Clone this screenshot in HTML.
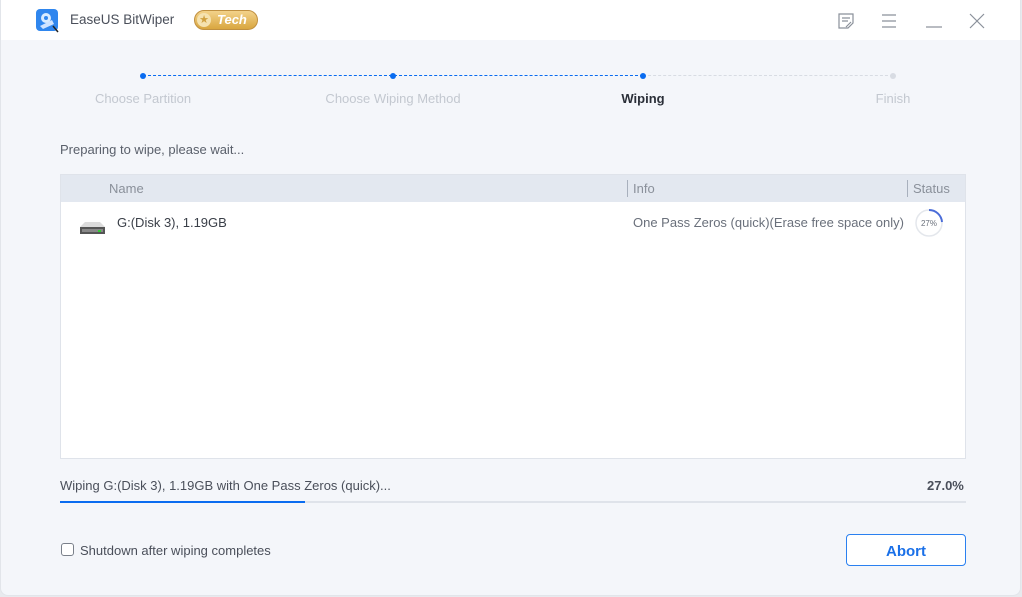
<!DOCTYPE html>
<html><head><meta charset="utf-8"><style>
*{margin:0;padding:0;box-sizing:border-box}
body{width:1022px;height:597px;background:#e8eaee;font-family:"Liberation Sans",sans-serif;position:relative;overflow:hidden}
.win{position:absolute;left:0;top:0;width:1021px;height:596px;background:#f4f6fa;border-radius:0 0 8px 8px;border:1px solid #e2e5ea;border-top:none}
.title{position:absolute;left:0;top:0;width:100%;height:40px;background:#fff}
.a{position:absolute;white-space:nowrap}
.lbl{font-size:13px;color:#c3c8d0;transform:translateX(-50%)}
.dot{position:absolute;width:6px;height:6px;border-radius:3px;background:#0a6cf0;top:73px}
</style></head><body>
<div class="win">
<div class="title">
 <svg class="a" style="left:34px;top:8px" width="25" height="25" viewBox="0 0 25 25">
  <rect x="1" y="1" width="22" height="22" rx="4" fill="#2f86ee"/>
  <circle cx="11" cy="10" r="5" fill="#d8ebff"/><circle cx="11" cy="10" r="2" fill="#2f86ee"/>
  <path d="M5 18 L17 12 L19 16 L8 21Z" fill="#cfe3ff"/><path d="M18 18 L23 24" stroke="#222" stroke-width="1.5"/>
 </svg>
 <div class="a" style="left:69px;top:12px;font-size:13.5px;color:#4a4f5a">EaseUS BitWiper</div>
 <div class="a" style="left:193px;top:10px;width:64px;height:20px;border-radius:10px;background:linear-gradient(#f3d28a,#d9a640);border:1px solid #c09040"></div>
 <div class="a" style="left:196px;top:13px;width:14px;height:14px;border-radius:7px;background:#f5e2b0;color:#d0a040;font-size:11px;text-align:center;line-height:14px">★</div>
 <div class="a" style="left:216px;top:12px;font-size:13px;font-weight:bold;font-style:italic;color:#fff">Tech</div>
 <svg class="a" style="left:836px;top:12px" width="18" height="18" viewBox="0 0 18 18" fill="none" stroke="#8a909a" stroke-width="1.2"><path d="M2 2H16V11L11 16H2Z"/><path d="M5 6H13M5 9H11M9 15L14 10"/></svg>
 <svg class="a" style="left:880px;top:13px" width="16" height="16" fill="none" stroke="#8a909a" stroke-width="1.2"><path d="M1 2H15M1 8H15M1 14H15"/></svg>
 <svg class="a" style="left:924px;top:13px" width="18" height="16" fill="none" stroke="#8a909a" stroke-width="1.2"><path d="M1 14H17"/></svg>
 <svg class="a" style="left:968px;top:13px" width="16" height="16" fill="none" stroke="#8a909a" stroke-width="1.2"><path d="M1 1L15 15M15 1L1 15"/></svg>
</div>
<div class="a" style="left:142px;top:75px;width:500px;border-top:1.3px dashed #0a6cf0"></div>
<div class="a" style="left:642px;top:75px;width:250px;border-top:1px dashed #d8dce3"></div>
<div class="dot" style="left:139px"></div><div class="dot" style="left:389px"></div><div class="dot" style="left:639px"></div><div class="dot" style="left:889px;background:#d8dce3"></div>
<div class="a lbl" style="left:142px;top:91px">Choose Partition</div>
<div class="a lbl" style="left:392px;top:91px">Choose Wiping Method</div>
<div class="a lbl" style="left:642px;top:91px;color:#2a2f38;font-weight:bold">Wiping</div>
<div class="a lbl" style="left:892px;top:91px">Finish</div>
<div class="a" style="left:59px;top:142px;font-size:13px;color:#5a606b">Preparing to wipe, please wait...</div>
<div class="a" style="left:59px;top:174px;width:906px;height:285px;background:#fff;border:1px solid #dfe3ea">
 <div style="height:27px;background:#e3e8f0;position:relative;font-size:13px;color:#8a909a">
  <span class="a" style="left:48px;top:6px">Name</span>
  <span class="a" style="left:566px;top:5px;height:17px;border-left:1px solid #a8b0bd"></span>
  <span class="a" style="left:572px;top:6px">Info</span>
  <span class="a" style="left:846px;top:5px;height:17px;border-left:1px solid #a8b0bd"></span>
  <span class="a" style="left:852px;top:6px">Status</span>
 </div>
 <svg class="a" style="left:17px;top:46px" width="30" height="14"><path d="M2 6L7 1H22L27 6V13H2Z" fill="#dcdcdc"/><rect x="2" y="6" width="25" height="7" fill="#555"/><rect x="4" y="8" width="21" height="3" fill="#888"/><rect x="20" y="9" width="3" height="2" fill="#3c3"/></svg>
 <div class="a" style="left:56px;top:40px;font-size:13px;color:#3a3f48">G:(Disk 3), 1.19GB</div>
 <div class="a" style="left:572px;top:40px;font-size:13px;color:#6a707b">One Pass Zeros (quick)(Erase free space only)</div>
 <svg class="a" style="left:853px;top:33px" width="30" height="30"><circle cx="15" cy="15" r="13" fill="none" stroke="#e4e7ec" stroke-width="1.5"/><path d="M15 2A13 13 0 0 1 28 14" fill="none" stroke="#4a6cd8" stroke-width="2"/><text x="15" y="18" font-size="8" text-anchor="middle" fill="#6a707b" font-family="Liberation Sans">27%</text></svg>
</div>
<div class="a" style="left:59px;top:478px;font-size:13px;color:#4a4f5a">Wiping G:(Disk 3), 1.19GB with One Pass Zeros (quick)...</div>
<div class="a" style="left:926px;top:478px;font-size:13px;color:#4a4f5a;font-weight:bold">27.0%</div>
<div class="a" style="left:59px;top:501px;width:906px;height:2px;background:#dfe3ea"></div>
<div class="a" style="left:59px;top:501px;width:245px;height:2px;background:#0a6cf0"></div>
<div class="a" style="left:60px;top:543px;width:13px;height:13px;border:1px solid #7a808a;border-radius:3px;background:#fff"></div>
<div class="a" style="left:79px;top:543px;font-size:13px;color:#4a4f5a">Shutdown after wiping completes</div>
<div class="a" style="left:845px;top:534px;width:120px;height:32px;border:1px solid #2a80f0;border-radius:4px;background:#fff;color:#1a70e8;font-size:15px;font-weight:bold;text-align:center;line-height:33px">Abort</div>
</div>
</body></html>
